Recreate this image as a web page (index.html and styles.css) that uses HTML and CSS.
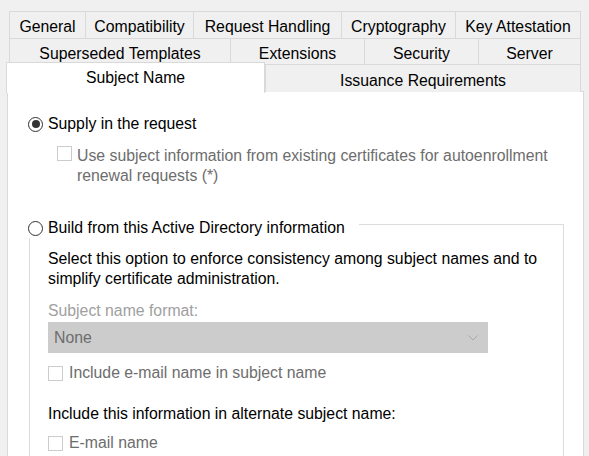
FILE: index.html
```html
<!DOCTYPE html>
<html>
<head>
<meta charset="utf-8">
<link rel="stylesheet" href="styles.css">
</head>
<body>
<div class="dialog">
  <div class="tabs">
    <div class="tab-row">
      <div class="tab w-general">General</div>
      <div class="tab w-compat">Compatibility</div>
      <div class="tab w-request">Request Handling</div>
      <div class="tab w-crypto">Cryptography</div>
      <div class="tab w-key last">Key Attestation</div>
    </div>
    <div class="tab-row">
      <div class="tab w-superseded">Superseded Templates</div>
      <div class="tab w-ext">Extensions</div>
      <div class="tab w-security">Security</div>
      <div class="tab w-server last">Server</div>
    </div>
    <div class="tab-row row-front">
      <div class="tab tab-selected">Subject Name</div>
      <div class="tab w-issuance last">Issuance Requirements</div>
    </div>
  </div>
  <div class="panel">
    <div class="option">
      <span class="radio checked"><span class="dot"></span></span>
      <span class="label">Supply in the request</span>
    </div>
    <div class="check-row sub-check">
      <span class="checkbox"></span>
      <span class="check-label disabled">Use subject information from existing certificates for autoenrollment<br>renewal requests (*)</span>
    </div>
    <div class="group">
      <div class="option legend">
        <span class="radio"></span>
        <span class="label">Build from this Active Directory information</span>
      </div>
      <div class="group-body">
        <p class="desc">Select this option to enforce consistency among subject names and to<br>simplify certificate administration.</p>
        <div class="field-label">Subject name format:</div>
        <div class="select">
          <span class="select-value">None</span>
          <svg class="chevron" width="10" height="6" viewBox="0 0 10 6"><path d="M0.5 0.5 L5 5 L9.5 0.5" fill="none" stroke="#a8a8a8" stroke-width="1"/></svg>
        </div>
        <div class="check-row email-check">
          <span class="checkbox"></span>
          <span class="check-label disabled">Include e-mail name in subject name</span>
        </div>
        <div class="alt-title">Include this information in alternate subject name:</div>
        <div class="check-row alt-check">
          <span class="checkbox"></span>
          <span class="check-label disabled">E-mail name</span>
        </div>
      </div>
    </div>
  </div>
</div>
</body>
</html>
```
FILE: styles.css
```css
html, body {
  margin: 0;
  padding: 0;
  background: #f0f0f0;
  overflow: hidden;
}
body {
  font-family: "Liberation Sans", Arial, sans-serif;
  font-size: 15.8px;
  color: #000;
  width: 589px;
  height: 456px;
}
.dialog {
  padding-top: 11px;
}
.tabs {
  margin-left: 9px;
  width: 572px;
  position: relative;
  z-index: 2;
}
.tab-row {
  display: flex;
  height: 27px;
}
.tab {
  box-sizing: border-box;
  height: 27px;
  border-top: 1px solid #d9d9d9;
  border-left: 1px solid #d9d9d9;
  background: #f0f0f0;
  display: flex;
  align-items: center;
  justify-content: center;
  white-space: nowrap;
  padding-top: 3px;
}
.tab.last {
  border-right: 1px solid #d9d9d9;
  flex: 1;
}
.w-general { width: 76px; }
.w-compat { width: 108px; }
.w-request { width: 148px; }
.w-crypto { width: 114px; }
.w-superseded { width: 221px; }
.w-ext { width: 134px; }
.w-security { width: 114px; }
.row-front {
  align-items: flex-end;
}
.tab-selected {
  width: 259px;
  height: 31px;
  margin-left: -3px;
  margin-bottom: -1px;
  background: #fff;
  border: 1px solid #d9d9d9;
  border-bottom: none;
  padding-top: 0;
  padding-bottom: 1px;
  position: relative;
  z-index: 3;
}
.w-issuance {
  height: 28px;
  padding-top: 4px;
}
.panel {
  box-sizing: border-box;
  margin-left: 7px;
  margin-top: -1px;
  width: 577px;
  height: 380px;
  background: #fff;
  border: 1px solid #d9d9d9;
  padding-top: 22px;
  position: relative;
  z-index: 1;
}
.option {
  display: flex;
  align-items: center;
  height: 20px;
  line-height: 20px;
  margin-left: 20px;
}
.radio {
  box-sizing: border-box;
  width: 15px;
  height: 15px;
  border: 1px solid #333;
  border-radius: 50%;
  background: #fff;
  display: flex;
  align-items: center;
  justify-content: center;
  margin-right: 5px;
  flex: none;
}
.radio .dot {
  width: 8px;
  height: 8px;
  border-radius: 50%;
  background: #333;
}
.check-row {
  display: flex;
  align-items: flex-start;
  line-height: 20px;
}
.checkbox {
  box-sizing: border-box;
  width: 15px;
  height: 15px;
  border: 1px solid #cccccc;
  background: #fff;
  flex: none;
  margin-top: 3px;
}
.check-label {
  margin-left: 5px;
}
.disabled {
  color: #6d6d6d;
}
.sub-check {
  margin-top: 12px;
  margin-left: 49px;
}
.sub-check .checkbox {
  margin-top: 0px;
}
.group {
  margin-top: 38px;
  margin-left: 21px;
  width: 535px;
  height: 240px;
  box-sizing: border-box;
  border-top: 1px solid #dcdcdc;
  border-left: 1px solid #dcdcdc;
  border-right: 1px solid #dcdcdc;
}
.legend {
  margin-top: -7px;
  margin-left: -2px;
  width: 331px;
  background: #fff;
}
.group-body {
  padding-left: 18px;
}
.desc {
  margin: 11px 0 0 0;
  line-height: 20px;
}
.field-label {
  margin-top: 12px;
  line-height: 20px;
  color: #a0a0a0;
}
.select {
  margin-top: 1px;
  width: 440px;
  height: 31px;
  background: #cccccc;
  display: flex;
  align-items: center;
  justify-content: space-between;
  box-sizing: border-box;
  padding: 1px 10px 0 6px;
}
.select-value {
  color: #6d6d6d;
}
.chevron {
  display: block;
}
.email-check {
  margin-top: 10px;
}
.email-check .checkbox,
.alt-check .checkbox {
  margin-top: 3px;
}
.email-check .check-label,
.alt-check .check-label {
  margin-left: 6px;
}
.alt-title {
  margin-top: 21px;
  line-height: 20px;
}
.alt-check {
  margin-top: 9px;
}
```
